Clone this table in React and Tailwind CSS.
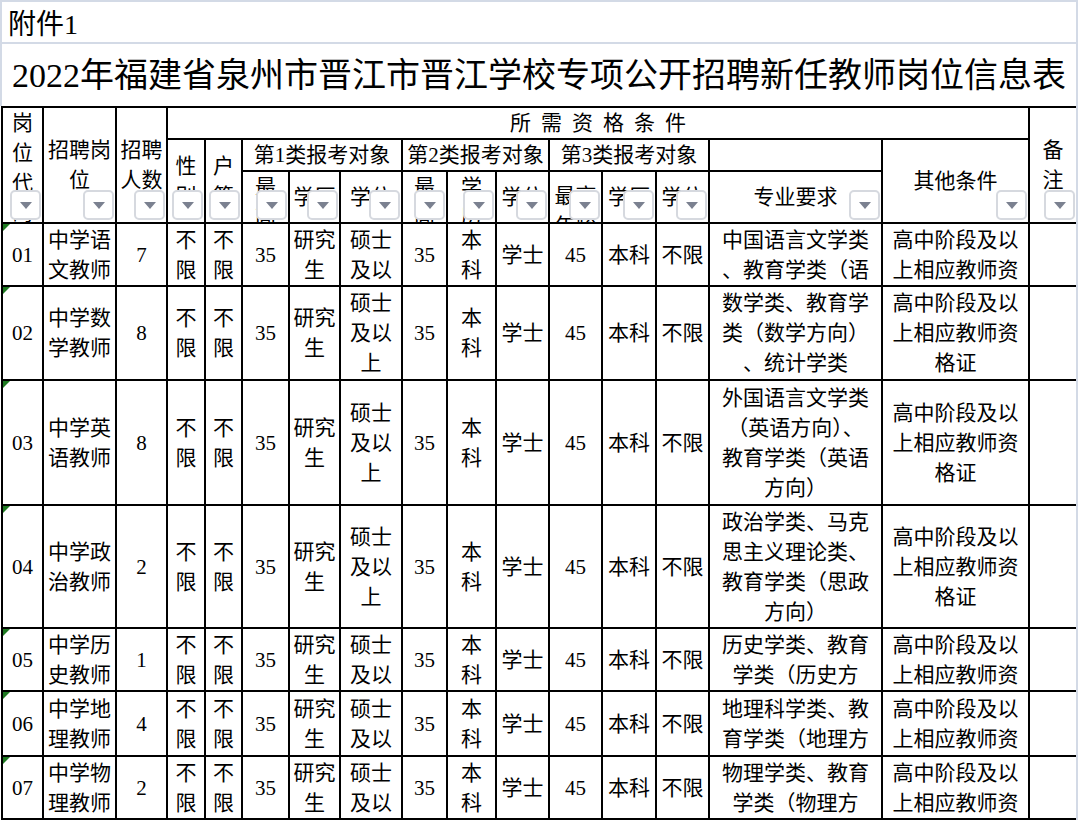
import React from 'react';

const FONT = "font-['Liberation_Serif','Noto_Sans_CJK_SC',serif]";

function FilterButton() {
  return (
    <div className="absolute right-[1px] bottom-[2px] w-[31px] h-[30px] rounded-[5px] border-2 border-[#d6d9df] bg-white flex items-center justify-center">
      <svg width="12" height="7" viewBox="0 0 12 7">
        <path d="M0 0H12L6 7Z" fill="#7b8190" />
      </svg>
    </div>
  );
}

function Cell({ lines = [], className = '', filter, corner }) {
  return (
    <div className={`relative bg-white overflow-hidden flex flex-col items-center [justify-content:safe_center] ${className}`}>
      {lines.map((l, i) => (
        <div key={i} className="whitespace-nowrap leading-[30px]">{l}</div>
      ))}
      {corner && (
        <svg className="absolute top-0 left-0" width="7" height="7" viewBox="0 0 7 7">
          <path d="M0 0H7L0 7Z" fill="#1f7a22" />
        </svg>
      )}
      {filter && <FilterButton />}
    </div>
  );
}

const rows = [
  { code: '01', post: ['中学语', '文教师'], n: '7', short: true, major: ['中国语言文学类', '、教育学类（语'] },
  { code: '02', post: ['中学数', '学教师'], n: '8', major: ['数学类、教育学', '类（数学方向）', '、统计学类'] },
  { code: '03', post: ['中学英', '语教师'], n: '8', major: ['外国语言文学类', '（英语方向）、', '教育学类（英语', '方向）'] },
  { code: '04', post: ['中学政', '治教师'], n: '2', major: ['政治学类、马克', '思主义理论类、', '教育学类（思政', '方向）'] },
  { code: '05', post: ['中学历', '史教师'], n: '1', short: true, major: ['历史学类、教育', '学类（历史方'] },
  { code: '06', post: ['中学地', '理教师'], n: '4', short: true, major: ['地理科学类、教', '育学类（地理方'] },
  { code: '07', post: ['中学物', '理教师'], n: '2', short: true, major: ['物理学类、教育', '学类（物理方'] },
];

export default function App() {
  return (
    <div className={`w-[1080px] h-[821px] overflow-hidden bg-white text-black ${FONT}`}>
      {/* sheet rows above the table */}
      <div className="w-[1078px] h-[44px] border-2 border-[#d3dae6] flex items-center pl-[6px] pt-[5px] text-[28px]">
        附件1
      </div>
      <div className="w-[1078px] h-[62px] border-x-2 border-[#d3dae6] flex items-center justify-center text-[34px] whitespace-nowrap">
        2022年福建省泉州市晋江市晋江学校专项公开招聘新任教师岗位信息表
      </div>

      {/* table */}
      <div className="ml-[1px] w-fit grid grid-cols-[39px_71px_49px_36px_35px_45px_49px_60px_43px_47px_51px_51px_52px_51px_171px_145px_46px] grid-rows-[30px_30px_50px_61px_92px_123px_121px_61px_63px_61px] gap-[2px] bg-black p-[2px] pr-0 border-r-2 border-[#d3dae6] text-[21px]">
        {/* header row 1 */}
        <Cell className="col-start-1 row-start-1 row-span-3" lines={['岗', '位', '代', '码']} filter />
        <Cell className="col-start-2 row-start-1 row-span-3" lines={['招聘岗', '位']} filter />
        <Cell className="col-start-3 row-start-1 row-span-3" lines={['招聘', '人数']} filter />
        <Cell className="col-start-4 col-span-13 row-start-1 tracking-[10px] pl-[10px]" lines={['所需资格条件']} />
        <Cell className="col-start-17 row-start-1 row-span-3" lines={['备', '注']} filter />

        {/* header row 2 */}
        <Cell className="col-start-4 row-start-2 row-span-2" lines={['性', '别']} filter />
        <Cell className="col-start-5 row-start-2 row-span-2" lines={['户', '籍']} filter />
        <Cell className="col-start-6 col-span-3 row-start-2" lines={['第1类报考对象']} />
        <Cell className="col-start-9 col-span-3 row-start-2" lines={['第2类报考对象']} />
        <Cell className="col-start-12 col-span-3 row-start-2" lines={['第3类报考对象']} />
        <Cell className="col-start-15 row-start-2" />
        <Cell className="col-start-16 row-start-2 row-span-2" lines={['其他条件']} filter />

        {/* header row 3 */}
        <Cell className="col-start-6 row-start-3" lines={['最', '高']} filter />
        <Cell className="col-start-7 row-start-3" lines={['学历']} filter />
        <Cell className="col-start-8 row-start-3" lines={['学位']} filter />
        <Cell className="col-start-9 row-start-3" lines={['最', '高']} filter />
        <Cell className="col-start-10 row-start-3" lines={['学', '历']} filter />
        <Cell className="col-start-11 row-start-3" lines={['学位']} filter />
        <Cell className="col-start-12 row-start-3 pt-[9px]" lines={['最高', '年龄']} filter />
        <Cell className="col-start-13 row-start-3" lines={['学历']} filter />
        <Cell className="col-start-14 row-start-3" lines={['学位']} filter />
        <Cell className="col-start-15 row-start-3" lines={['专业要求']} filter />

        {/* data rows */}
        {rows.map((r) => (
          <React.Fragment key={r.code}>
            <Cell lines={[r.code]} corner />
            <Cell lines={r.post} />
            <Cell lines={[r.n]} />
            <Cell lines={['不', '限']} />
            <Cell lines={['不', '限']} />
            <Cell lines={['35']} />
            <Cell lines={['研究', '生']} />
            <Cell lines={r.short ? ['硕士', '及以'] : ['硕士', '及以', '上']} />
            <Cell lines={['35']} />
            <Cell lines={['本', '科']} />
            <Cell lines={['学士']} />
            <Cell lines={['45']} />
            <Cell lines={['本科']} />
            <Cell lines={['不限']} />
            <Cell lines={r.major} />
            <Cell lines={r.short ? ['高中阶段及以', '上相应教师资'] : ['高中阶段及以', '上相应教师资', '格证']} />
            <Cell />
          </React.Fragment>
        ))}
      </div>
    </div>
  );
}
